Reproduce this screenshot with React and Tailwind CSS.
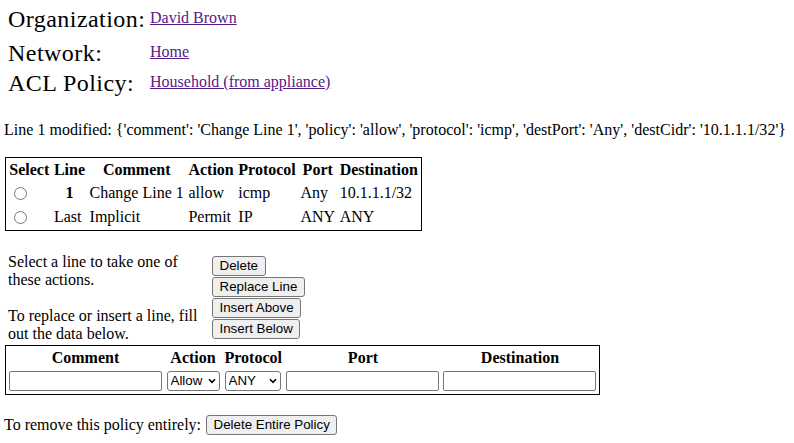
import React from 'react';

const btn =
  "block bg-[#efefef] border border-[#767676] rounded-[3px] px-[6.5px] h-[20px] leading-[16px] text-[13.33px] font-['Liberation_Sans',Arial,sans-serif] text-black whitespace-nowrap";

const cell = 'py-px px-[1.3px]';

function Chevron() {
  return (
    <svg className="absolute right-[4px] top-[7px] pointer-events-none" width="8" height="6" viewBox="0 0 8 6">
      <path d="M1 1.2 L4 4.3 L7 1.2" fill="none" stroke="#000" strokeWidth="1.6" />
    </svg>
  );
}

export default function App() {
  const rows = [
    { line: '1', bold: true, comment: 'Change Line 1', action: 'allow', protocol: 'icmp', port: 'Any', dest: '10.1.1.1/32' },
    { line: 'Last', bold: false, comment: 'Implicit', action: 'Permit', protocol: 'IP', port: 'ANY', dest: 'ANY' },
  ];

  return (
    <div className="w-[794px] h-[443px] overflow-hidden bg-white text-black text-[16px] leading-[18px] font-['Liberation_Serif','Times_New_Roman',serif]">
      {/* Header block */}
      <div className="pl-[8px] pt-[5px] grid grid-cols-[142px_auto]">
        <div className="text-[24px] leading-[28px] tracking-[0.45px] h-[34px] whitespace-nowrap">Organization:</div>
        <div className="pt-[4px]"><a href="#" className="text-[#551a8b] underline">David Brown</a></div>
        <div className="text-[24px] leading-[28px] tracking-[0.45px] h-[30px] whitespace-nowrap">Network:</div>
        <div className="pt-[4px]"><a href="#" className="text-[#551a8b] underline">Home</a></div>
        <div className="text-[24px] leading-[28px] tracking-[0.45px] h-[30px] whitespace-nowrap">ACL Policy:</div>
        <div className="pt-[4px]"><a href="#" className="text-[#551a8b] underline">Household (from appliance)</a></div>
      </div>

      {/* Status message */}
      <p className="pl-[4px] mt-[22px] whitespace-nowrap tracking-[0.015px]">
        Line 1 modified: {"{'comment': 'Change Line 1', 'policy': 'allow', 'protocol': 'icmp', 'destPort': 'Any', 'destCidr': '10.1.1.1/32'}"}
      </p>

      {/* ACL table */}
      <div className="pl-[5px] mt-[18px]">
        <table className="border border-black border-separate border-spacing-[2px]">
          <thead>
            <tr className="h-[20px]">
              <th className={cell + ' font-bold'}>Select</th>
              <th className={cell + ' font-bold'}>Line</th>
              <th className={cell + ' font-bold'}>Comment</th>
              <th className={cell + ' font-bold'}>Action</th>
              <th className={cell + ' font-bold'}>Protocol</th>
              <th className={cell + ' font-bold'}>Port</th>
              <th className={cell + ' font-bold'}>Destination</th>
            </tr>
          </thead>
          <tbody>
            {rows.map((r) => (
              <tr key={r.line} className="h-[22px]">
                <td className={cell + ' text-left'}>
                  <input type="radio" name="line" className="m-[3px_3px_0_5px] w-[13px] h-[13px] align-[-1px]" />
                </td>
                {r.bold ? (
                  <th className={cell + ' font-bold text-center'}>{r.line}</th>
                ) : (
                  <td className={cell + ' text-left'}>{r.line}</td>
                )}
                <td className={cell + ' text-left'}>{r.comment}</td>
                <td className={cell + ' text-left'}>{r.action}</td>
                <td className={cell + ' text-left'}>{r.protocol}</td>
                <td className={cell + ' text-left'}>{r.port}</td>
                <td className={cell + ' text-left'}>{r.dest}</td>
              </tr>
            ))}
          </tbody>
        </table>
      </div>

      {/* Actions */}
      <div className="flex pl-[8px] mt-[22px]">
        <div className="w-[204px]">
          <p>Select a line to take one of<br />these actions.</p>
          <p className="mt-[18px]">To replace or insert a line, fill<br />out the data below.</p>
        </div>
        <div className="flex flex-col gap-[1px] items-start pt-[3px]">
          <button className={btn}>Delete</button>
          <button className={btn}>Replace Line</button>
          <button className={btn}>Insert Above</button>
          <button className={btn}>Insert Below</button>
        </div>
      </div>

      {/* New line form */}
      <div className="pl-[5px] mt-[2px]">
        <table className="border border-black border-separate border-spacing-[2px]">
          <thead>
            <tr className="h-[20px]">
              <th className="p-px font-bold">Comment</th>
              <th className="py-px px-[1.5px] font-bold">Action</th>
              <th className="py-px px-[1.5px] font-bold">Protocol</th>
              <th className="p-px font-bold">Port</th>
              <th className="p-px font-bold">Destination</th>
            </tr>
          </thead>
          <tbody>
            <tr>
              <td className="p-px">
                <input type="text" className="block w-[153px] h-[20px] border border-[#767676] rounded-[2px] bg-white" />
              </td>
              <td className="py-px px-[1.5px]">
                <div className="relative w-[53px]">
                  <select className="appearance-none w-[53px] h-[20px] border border-[#767676] rounded-[3px] bg-white pl-[3px] text-[13.33px] font-['Liberation_Sans',Arial,sans-serif]">
                    <option>Allow</option>
                    <option>Deny</option>
                  </select>
                  <Chevron />
                </div>
              </td>
              <td className="py-px px-[1.5px]">
                <div className="relative w-[56px]">
                  <select className="appearance-none w-[56px] h-[20px] border border-[#767676] rounded-[3px] bg-white pl-[3px] text-[13.33px] font-['Liberation_Sans',Arial,sans-serif]">
                    <option>ANY</option>
                    <option>TCP</option>
                    <option>UDP</option>
                    <option>ICMP</option>
                  </select>
                  <Chevron />
                </div>
              </td>
              <td className="p-px">
                <input type="text" className="block w-[153px] h-[20px] border border-[#767676] rounded-[2px] bg-white" />
              </td>
              <td className="p-px">
                <input type="text" className="block w-[153px] h-[20px] border border-[#767676] rounded-[2px] bg-white" />
              </td>
            </tr>
          </tbody>
        </table>
      </div>

      {/* Delete policy */}
      <div className="flex items-center pl-[4px] mt-[20px] whitespace-nowrap">
        <span>To remove this policy entirely:</span>
        <button className={btn + ' ml-[5px]'}>Delete Entire Policy</button>
      </div>
    </div>
  );
}
